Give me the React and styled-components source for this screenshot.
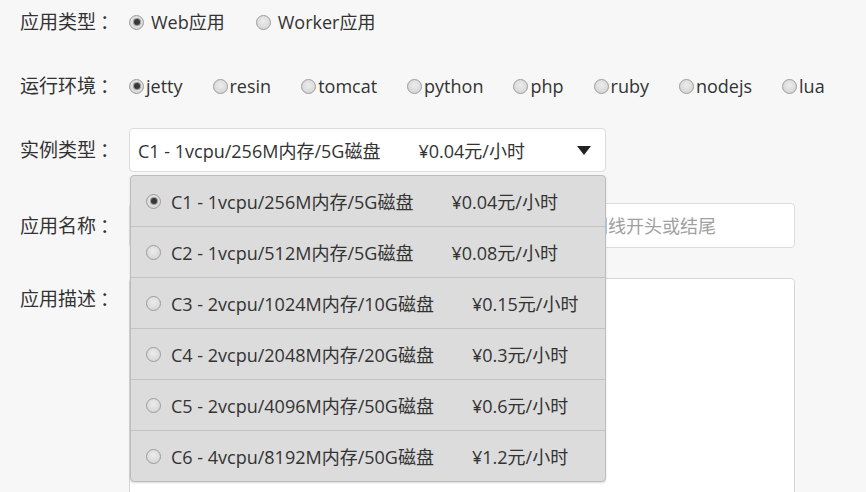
import React, { useState } from 'react'
import styled, { createGlobalStyle } from 'styled-components'

const GlobalStyle = createGlobalStyle`
  html, body {
    margin: 0;
    padding: 0;
    background: #f7f7f7;
    overflow: hidden;
  }
  body {
    font-family: "Open Sans", "Noto Sans CJK SC", sans-serif;
    color: #333;
  }
`

const Form = styled.div`
  display: flex;
  flex-direction: column;
  padding: 0 0 0 20px;
`

const Row = styled.div`
  display: flex;
  align-items: ${p => (p.$top ? 'flex-start' : 'center')};
  min-height: 44px;
  margin-top: ${p => p.$mt || 0}px;
`

const Label = styled.div`
  width: 109px;
  flex-shrink: 0;
  font-size: 19px;
  line-height: 26px;
  color: #333;
  white-space: nowrap;
  padding-top: ${p => (p.$top ? '8px' : '0')};
`

const Colon = styled.span`
  margin-left: 4px;
`

const RadioGroup = styled.div`
  display: flex;
  align-items: center;
  gap: ${p => p.$gap}px;
`

const Option = styled.label`
  display: flex;
  align-items: center;
  gap: ${p => p.$gap}px;
  font-size: 18px;
  line-height: 24px;
  cursor: pointer;
`

const Dot = styled.span`
  width: 13px;
  height: 13px;
  border-radius: 50%;
  border: 1px solid #9c9c9c;
  background: radial-gradient(circle at 50% 40%, #ececec 0%, #dadada 65%, #cfcfcf 100%);
  box-sizing: content-box;
  display: flex;
  align-items: center;
  justify-content: center;
  flex-shrink: 0;

  &::after {
    content: '';
    width: 6px;
    height: 6px;
    border-radius: 50%;
    background: #383838;
    box-shadow: 0 0 0 1px #9a9a9a;
    display: ${p => (p.$on ? 'block' : 'none')};
  }
`

const SelectWrap = styled.div`
  position: relative;
  width: 477px;
`

const SelectBox = styled.div`
  height: 44px;
  box-sizing: border-box;
  background: #fff;
  border: 1px solid #dcdcdc;
  border-radius: 4px;
  display: flex;
  align-items: center;
  padding: 0 14px 0 8px;
  font-size: 18px;
  cursor: pointer;
`

const Spec = styled.span`
  white-space: nowrap;
`

const Price = styled.span`
  margin-left: 38px;
  white-space: nowrap;
`

const Arrow = styled.span`
  margin-left: auto;
  width: 0;
  height: 0;
  border-left: 7px solid transparent;
  border-right: 7px solid transparent;
  border-top: 9px solid #222;
`

const Menu = styled.ul`
  position: absolute;
  top: 47px;
  left: 1px;
  right: 0;
  margin: 0;
  padding: 0;
  list-style: none;
  background: #dcdcdc;
  border: 1px solid #bdbdbd;
  border-radius: 4px;
  box-shadow: 0 1px 2px rgba(0, 0, 0, 0.15);
  z-index: 10;
`

const MenuItem = styled.li`
  height: 50px;
  display: flex;
  align-items: center;
  padding-left: 15px;
  font-size: 18px;
  border-top: ${p => (p.$first ? 'none' : '1px solid #c2c2c2')};

  ${Dot} {
    margin-right: 10px;
  }
`

const Input = styled.input`
  width: 666px;
  height: 45px;
  box-sizing: border-box;
  border: 1px solid #dcdcdc;
  border-radius: 4px;
  background: #fff;
  padding: 0 10px;
  font-family: inherit;
  font-size: 18px;
  color: #333;
  outline: none;

  &::placeholder {
    color: #a0a0a0;
  }
`

const TextArea = styled.textarea`
  width: 666px;
  height: 260px;
  box-sizing: border-box;
  border: 1px solid #d6d6d6;
  border-radius: 4px;
  background: #fff;
  resize: none;
  outline: none;
  font-family: inherit;
`

const instances = [
  { spec: 'C1 - 1vcpu/256M内存/5G磁盘', price: '¥0.04元/小时' },
  { spec: 'C2 - 1vcpu/512M内存/5G磁盘', price: '¥0.08元/小时' },
  { spec: 'C3 - 2vcpu/1024M内存/10G磁盘', price: '¥0.15元/小时' },
  { spec: 'C4 - 2vcpu/2048M内存/20G磁盘', price: '¥0.3元/小时' },
  { spec: 'C5 - 2vcpu/4096M内存/50G磁盘', price: '¥0.6元/小时' },
  { spec: 'C6 - 4vcpu/8192M内存/50G磁盘', price: '¥1.2元/小时' },
]

const runtimes = ['jetty', 'resin', 'tomcat', 'python', 'php', 'ruby', 'nodejs', 'lua']

const FieldLabel = ({ children, top }) => (
  <Label $top={top}>
    {children}
    <Colon>：</Colon>
  </Label>
)

const App = () => {
  const [appType, setAppType] = useState('web')
  const [runtime, setRuntime] = useState('jetty')
  const [instance, setInstance] = useState(0)

  return (
    <Form>
      <GlobalStyle />
      <Row>
        <FieldLabel>应用类型</FieldLabel>
        <RadioGroup $gap={31}>
          <Option $gap={7} onClick={() => setAppType('web')}>
            <Dot $on={appType === 'web'} />Web应用
          </Option>
          <Option $gap={7} onClick={() => setAppType('worker')}>
            <Dot $on={appType === 'worker'} />Worker应用
          </Option>
        </RadioGroup>
      </Row>

      <Row $mt={20}>
        <FieldLabel>运行环境</FieldLabel>
        <RadioGroup $gap={30}>
          {runtimes.map(r => (
            <Option key={r} $gap={2} onClick={() => setRuntime(r)}>
              <Dot $on={runtime === r} />{r}
            </Option>
          ))}
        </RadioGroup>
      </Row>

      <Row $mt={20}>
        <FieldLabel>实例类型</FieldLabel>
        <SelectWrap>
          <SelectBox>
            <Spec>{instances[instance].spec}</Spec>
            <Price>{instances[instance].price}</Price>
            <Arrow />
          </SelectBox>
          <Menu>
            {instances.map((it, i) => (
              <MenuItem key={it.spec} $first={i === 0} onClick={() => setInstance(i)}>
                <Dot $on={instance === i} />
                <Spec>{it.spec}</Spec>
                <Price>{it.price}</Price>
              </MenuItem>
            ))}
          </Menu>
        </SelectWrap>
      </Row>

      <Row $mt={31}>
        <FieldLabel>应用名称</FieldLabel>
        <Input placeholder="请输入名称，由小写字母、数字和中划线组成，不能以中划线开头或结尾" />
      </Row>

      <Row $mt={30} $top>
        <FieldLabel top>应用描述</FieldLabel>
        <TextArea />
      </Row>
    </Form>
  )
}

export default App
